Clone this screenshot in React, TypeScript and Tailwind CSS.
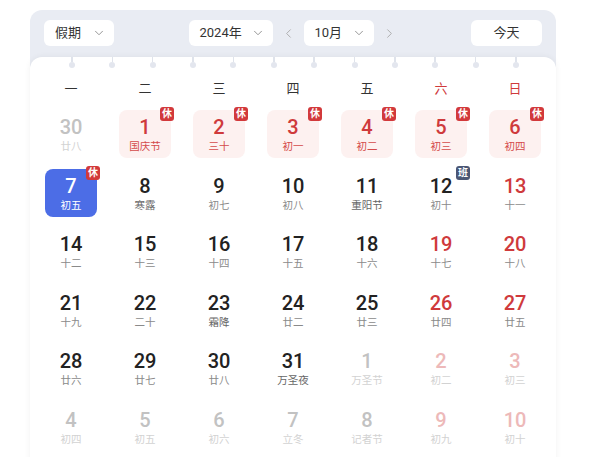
import { ChevronDown, ChevronLeft, ChevronRight } from "lucide-react";

type Day = {
  n: number;
  l: string;
  other?: boolean;
  weekend?: boolean;
  holiday?: boolean;
  work?: boolean;
  selected?: boolean;
  fest?: boolean;
};

const weekdays = ["一", "二", "三", "四", "五", "六", "日"];

const rows: Day[][] = [
  [
    { n: 30, l: "廿八", other: true },
    { n: 1, l: "国庆节", holiday: true },
    { n: 2, l: "三十", holiday: true },
    { n: 3, l: "初一", holiday: true },
    { n: 4, l: "初二", holiday: true },
    { n: 5, l: "初三", holiday: true, weekend: true },
    { n: 6, l: "初四", holiday: true, weekend: true },
  ],
  [
    { n: 7, l: "初五", selected: true },
    { n: 8, l: "寒露", fest: true },
    { n: 9, l: "初七" },
    { n: 10, l: "初八" },
    { n: 11, l: "重阳节", fest: true },
    { n: 12, l: "初十", work: true },
    { n: 13, l: "十一", weekend: true },
  ],
  [
    { n: 14, l: "十二" },
    { n: 15, l: "十三" },
    { n: 16, l: "十四" },
    { n: 17, l: "十五" },
    { n: 18, l: "十六" },
    { n: 19, l: "十七", weekend: true },
    { n: 20, l: "十八", weekend: true },
  ],
  [
    { n: 21, l: "十九" },
    { n: 22, l: "二十" },
    { n: 23, l: "霜降", fest: true },
    { n: 24, l: "廿二" },
    { n: 25, l: "廿三" },
    { n: 26, l: "廿四", weekend: true },
    { n: 27, l: "廿五", weekend: true },
  ],
  [
    { n: 28, l: "廿六" },
    { n: 29, l: "廿七" },
    { n: 30, l: "廿八" },
    { n: 31, l: "万圣夜", fest: true },
    { n: 1, l: "万圣节", other: true },
    { n: 2, l: "初二", other: true, weekend: true },
    { n: 3, l: "初三", other: true, weekend: true },
  ],
  [
    { n: 4, l: "初四", other: true },
    { n: 5, l: "初五", other: true },
    { n: 6, l: "初六", other: true },
    { n: 7, l: "立冬", other: true },
    { n: 8, l: "记者节", other: true },
    { n: 9, l: "初九", other: true, weekend: true },
    { n: 10, l: "初十", other: true, weekend: true },
  ],
];

function Select({ label, width }: { label: string; width: string }) {
  return (
    <div
      className={`flex h-[26px] items-center justify-between rounded-[6px] bg-white pl-[11px] pr-[8px] text-[13px] text-[#333] ${width}`}
    >
      <span>{label}</span>
      <ChevronDown className="h-[14px] w-[14px] text-[#888]" strokeWidth={1.5} />
    </div>
  );
}

function Cell({ d }: { d: Day }) {
  let box = "";
  let num = "text-[#222]";
  let lunar = d.fest ? "text-[#666]" : "text-[#8a8a8a]";

  if (d.other) {
    num = d.weekend ? "text-[#edb9b9]" : "text-[#c2c2c2]";
    lunar = "text-[#d2d2d2]";
  } else if (d.selected) {
    box = "bg-[#4c6de6]";
    num = "text-white";
    lunar = "text-white";
  } else if (d.holiday) {
    box = "bg-[#fdf1f0]";
    num = "text-[#cf3a3c]";
    lunar = "text-[#d44a4a]";
  } else if (d.weekend) {
    num = "text-[#cf3a3c]";
  }

  const badge = d.holiday || d.selected ? "休" : d.work ? "班" : null;

  return (
    <div className="flex justify-center">
      <div
        className={`relative flex h-[48px] w-[52px] flex-col items-center rounded-[8px] pt-[4px] ${box}`}
      >
        <span className={`text-[20px] font-medium leading-[26px] ${num}`}>{d.n}</span>
        <span className={`text-[10.5px] leading-[13px] ${lunar}`}>{d.l}</span>
        {badge && (
          <span
            className={`absolute right-[-3px] top-[-3px] flex h-[14px] w-[14px] items-center justify-center rounded-[3px] text-[10px] font-bold leading-none text-white ${
              badge === "班" ? "bg-[#4b5775]" : "bg-[#d2393b]"
            }`}
          >
            {badge}
          </span>
        )}
      </div>
    </div>
  );
}

export default function App() {
  return (
    <div
      className="h-screen w-full overflow-hidden bg-white"
      style={{ fontFamily: 'Roboto, "Noto Sans CJK SC", sans-serif' }}
    >
      <div className="ml-[30px] mt-[10px] w-[526px] rounded-t-[12px] bg-[#e9ecf3]">
        {/* Toolbar */}
        <div className="flex items-center justify-between px-[14px] pb-[11px] pt-[10px]">
          <Select label="假期" width="w-[70px]" />
          <div className="flex items-center">
            <Select label="2024年" width="w-[84px]" />
            <ChevronLeft className="mx-[8px] h-[15px] w-[15px] text-[#aaa]" strokeWidth={1.5} />
            <Select label="10月" width="w-[70px]" />
            <ChevronRight className="ml-[8px] h-[15px] w-[15px] text-[#aaa]" strokeWidth={1.5} />
          </div>
          <div className="flex h-[26px] w-[71px] items-center justify-center rounded-[6px] bg-white text-[13px] text-[#333]">
            今天
          </div>
        </div>

        {/* Calendar panel */}
        <div className="h-[420px] rounded-t-[12px] bg-white px-[4px] shadow-[0_0_6px_rgba(0,0,0,0.06)]">
          <div className="flex justify-between pl-[35px] pr-[33px]">
            {Array.from({ length: 12 }).map((_, i) => (
              <div key={i} className="flex w-[6px] flex-col items-center">
                <div className="h-[5px] w-[1.5px] bg-[#dfe3eb]" />
                <div className="h-[6px] w-[6px] rounded-full bg-[#e3e6ee]" />
              </div>
            ))}
          </div>

          <div className="grid h-[42px] grid-cols-7 items-center">
            {weekdays.map((w, i) => (
              <div
                key={w}
                className={`text-center text-[13px] ${i >= 5 ? "text-[#cf3a3c]" : "text-[#333]"}`}
              >
                {w}
              </div>
            ))}
          </div>

          <div className="grid grid-cols-7 auto-rows-[48px] gap-y-[10.6px]">
            {rows.flat().map((d, i) => (
              <Cell key={i} d={d} />
            ))}
          </div>
        </div>
      </div>
    </div>
  );
}
